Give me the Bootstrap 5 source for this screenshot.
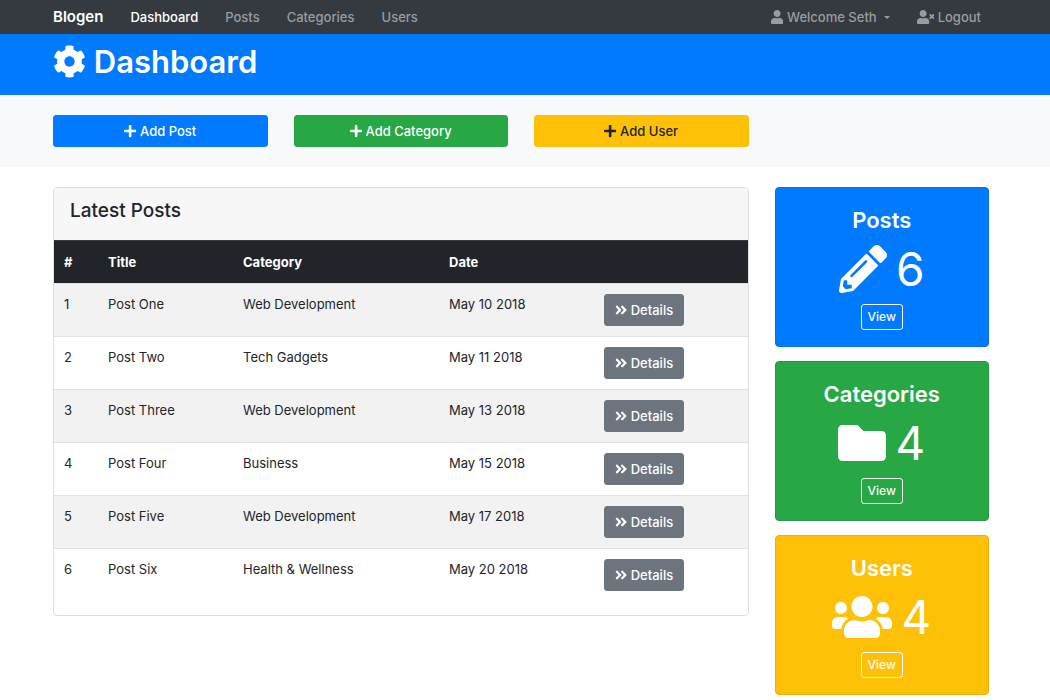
<!DOCTYPE html>
<html lang="en">
<head>
<meta charset="utf-8">
<meta name="viewport" content="width=device-width, initial-scale=1">
<title>Blogen - Dashboard</title>
<link rel="stylesheet" href="https://cdn.jsdelivr.net/npm/bootstrap@5.3.0/dist/css/bootstrap.min.css">
<style>
  body { font-family: Inter, "Liberation Sans", sans-serif; font-size: 13px; line-height: 20px; color: #212529; }
  .container { max-width: 970px; padding-left: 13px; padding-right: 21px; }
  .row { --bs-gutter-x: 26px; }
  .ico { height: 14px; fill: currentColor; vertical-align: -2px; }

  .topbar { background: #343a40; padding: 0; font-weight: 500; }
  .topbar .navbar-brand { font-size: 15px; line-height: 20px; padding: 7px 0; margin-right: 19px; font-weight: 600; }
  .topbar .nav-link { padding: 7px; line-height: 20px; color: #9a9da0; }
  .topbar .nav-link.active { color: #fff; }
  .topbar .navbar-nav { gap: 11px; }
  .topbar .dropdown-toggle::after { margin-left: 7px; border-width: 3px 3px 0; vertical-align: 3px; }

  .page-title { background: #007bff; color: #fff; padding: 8px 0 13px; }
  .page-title h1 { font-size: 31px; line-height: 40px; font-weight: 600; margin: 0; }
  .page-title .ico { height: 33px; vertical-align: -5px; }
  .actions { background: #f8f9fa; padding: 20px 0; margin-bottom: 20px; }

  .btn { --bs-btn-font-size: 13px; --bs-btn-line-height: 20px; --bs-btn-padding-x: 10px; --bs-btn-padding-y: 5px; --bs-btn-border-radius: 3px; --bs-btn-font-weight: 500; }
  .btn-primary { --bs-btn-bg: #007bff; --bs-btn-border-color: #007bff; }
  .btn-success { --bs-btn-bg: #28a745; --bs-btn-border-color: #28a745; }
  .btn-warning { --bs-btn-bg: #ffc107; --bs-btn-border-color: #ffc107; --bs-btn-color: #212529; }
  .btn-secondary { --bs-btn-bg: #6c757d; --bs-btn-border-color: #6c757d; }

  .card { --bs-card-border-radius: 4px; --bs-card-inner-border-radius: 3px; --bs-card-border-color: #dfdfdf; }
  .posts .card-header { background: #f7f7f7; padding: 11px 16px 17px; border-bottom: 0; }
  .posts h4 { font-size: 19px; line-height: 24px; font-weight: 500; margin: 0; }
  .posts .table { --bs-table-striped-bg: #f2f2f2; --bs-table-striped-color: #212529; --bs-table-color: #212529; table-layout: fixed; min-width: 640px; margin-bottom: 14px; border-color: #dee2e6; }
  .posts th, .posts td { padding: 10px; }
  .posts .table td { border-width: 1px 0 0; }
  .posts .table-dark { --bs-table-bg: #212529; }
  .posts thead th { padding: 11px 10px; border-width: 1px 0 0; font-weight: 700; }
  .col-num { width: 44px; }
  .col-title { width: 135px; }
  .col-cat { width: 206px; }
  .col-date { width: 155px; }

  .stat { color: #fff; text-align: center; margin-bottom: 14px; }
  .stat .card-body { padding: 16px; }
  .stat h3 { font-size: 22px; line-height: 32px; font-weight: 600; margin: 0; }
  .stat .figure-line { display: flex; justify-content: center; align-items: center; gap: 9px; font-size: 46px; line-height: 56px; font-weight: 400; margin: 5px 0 7px; }
  .stat .ico { height: 48px; }
  .stat .btn { --bs-btn-font-size: 12px; --bs-btn-line-height: 18px; --bs-btn-padding-x: 6px; --bs-btn-padding-y: 3px; }
  .stat-posts { background: #007bff; --bs-card-border-color: #0071eb; }
  .stat-categories { background: #28a745; --bs-card-border-color: #259a40; }
  .stat-users { background: #ffc107; --bs-card-border-color: #ebb206; }
</style>
</head>
<body>
<svg class="d-none" xmlns="http://www.w3.org/2000/svg">
  <symbol id="i-cog" viewBox="0 0 512 512"><path d="M487.4 315.7l-42.6-24.6c4.3-23.2 4.3-47 0-70.2l42.6-24.6c4.9-2.8 7.1-8.6 5.5-14-11.1-35.6-30-67.8-54.7-94.6-3.8-4.1-10-5.1-14.8-2.3L380.8 110c-17.9-15.4-38.5-27.3-60.8-35.1V25.8c0-5.6-3.9-10.5-9.4-11.7-36.7-8.2-74.3-7.8-109.2 0-5.5 1.2-9.4 6.1-9.4 11.7V75c-22.2 7.9-42.8 19.8-60.8 35.1L88.7 85.5c-4.9-2.8-11-1.9-14.8 2.3-24.7 26.7-43.6 58.9-54.7 94.6-1.7 5.4.6 11.2 5.5 14L67.3 221c-4.3 23.2-4.3 47 0 70.2l-42.6 24.6c-4.9 2.8-7.1 8.6-5.5 14 11.1 35.6 30 67.8 54.7 94.6 3.8 4.1 10 5.1 14.8 2.3l42.6-24.6c17.9 15.4 38.5 27.3 60.8 35.1v49.2c0 5.6 3.9 10.5 9.4 11.7 36.7 8.2 74.3 7.8 109.2 0 5.5-1.2 9.4-6.1 9.4-11.7v-49.2c22.2-7.9 42.8-19.8 60.8-35.1l42.6 24.6c4.9 2.8 11 1.9 14.8-2.3 24.7-26.7 43.6-58.9 54.7-94.6 1.5-5.5-.7-11.3-5.6-14.1zM256 336c-44.1 0-80-35.9-80-80s35.9-80 80-80 80 35.9 80 80-35.9 80-80 80z"/></symbol>
  <symbol id="i-user" viewBox="0 0 448 512"><path d="M224 256c70.7 0 128-57.3 128-128S294.7 0 224 0 96 57.3 96 128s57.3 128 128 128zm89.6 32h-16.7c-22.2 10.2-46.9 16-72.9 16s-50.6-5.8-72.9-16h-16.7C60.2 288 0 348.2 0 422.4V464c0 26.5 21.5 48 48 48h352c26.5 0 48-21.5 48-48v-41.6c0-74.2-60.2-134.4-134.4-134.4z"/></symbol>
  <symbol id="i-user-times" viewBox="0 0 640 512"><path d="M589.6 240l45.6-45.6c6.3-6.3 6.3-16.5 0-22.8l-22.8-22.8c-6.3-6.3-16.5-6.3-22.8 0L544 194.4l-45.6-45.6c-6.3-6.3-16.5-6.3-22.8 0l-22.8 22.8c-6.3 6.3-6.3 16.5 0 22.8l45.6 45.6-45.6 45.6c-6.3 6.3-6.3 16.5 0 22.8l22.8 22.8c6.3 6.3 16.5 6.3 22.8 0l45.6-45.6 45.6 45.6c6.3 6.3 16.5 6.3 22.8 0l22.8-22.8c6.3-6.3 6.3-16.5 0-22.8L589.6 240zM224 256c70.7 0 128-57.3 128-128S294.7 0 224 0 96 57.3 96 128s57.3 128 128 128zm89.6 32h-16.7c-22.2 10.2-46.9 16-72.9 16s-50.6-5.8-72.9-16h-16.7C60.2 288 0 348.2 0 422.4V464c0 26.5 21.5 48 48 48h352c26.5 0 48-21.5 48-48v-41.6c0-74.2-60.2-134.4-134.4-134.4z"/></symbol>
  <symbol id="i-plus" viewBox="0 0 448 512"><path d="M416 208H272V64c0-17.67-14.33-32-32-32h-32c-17.67 0-32 14.33-32 32v144H32c-17.67 0-32 14.33-32 32v32c0 17.67 14.33 32 32 32h144v144c0 17.67 14.33 32 32 32h32c17.67 0 32-14.33 32-32V304h144c17.67 0 32-14.33 32-32v-32c0-17.67-14.33-32-32-32z"/></symbol>
  <symbol id="i-more" viewBox="0 0 448 512"><path d="M224.3 273l-136 136c-9.4 9.4-24.6 9.4-33.9 0l-22.6-22.6c-9.4-9.4-9.4-24.6 0-33.9l96.4-96.4-96.4-96.4c-9.4-9.4-9.4-24.6 0-33.9L54.3 103c9.4-9.4 24.6-9.4 33.9 0l136 136c9.5 9.4 9.5 24.6.1 34zm192-34l-136-136c-9.4-9.4-24.6-9.4-33.9 0l-22.6 22.6c-9.4 9.4-9.4 24.6 0 33.9l96.4 96.4-96.4 96.4c-9.4 9.4-9.4 24.6 0 33.9l22.6 22.6c9.4 9.4 24.6 9.4 33.9 0l136-136c9.4-9.2 9.4-24.4 0-33.8z"/></symbol>
  <symbol id="i-pencil" viewBox="0 0 512 512"><path d="M497.9 142.1l-46.1 46.1c-4.7 4.7-12.3 4.7-17 0l-111-111c-4.7-4.7-4.7-12.3 0-17l46.1-46.1c18.7-18.7 49.1-18.7 67.9 0l60.1 60.1c18.8 18.7 18.8 49.1 0 67.9zM284.2 99.8L21.6 362.4.4 483.9c-2.9 16.4 11.4 30.6 27.8 27.8l121.5-21.3 262.6-262.6c4.7-4.7 4.7-12.3 0-17l-111-111c-4.8-4.7-12.4-4.7-17.1 0zM124.1 339.9c-5.5-5.5-5.5-14.3 0-19.8l154-154c5.5-5.5 14.3-5.5 19.8 0s5.5 14.3 0 19.8l-154 154c-5.5 5.5-14.3 5.5-19.8 0zM88 424h48v36.3l-64.5 11.3-31.1-31.1L51.7 376H88v48z"/></symbol>
  <symbol id="i-folder" viewBox="0 0 512 512"><path d="M464 128H272l-64-64H48C21.49 64 0 85.49 0 112v288c0 26.51 21.49 48 48 48h416c26.51 0 48-21.49 48-48V176c0-26.51-21.49-48-48-48z"/></symbol>
  <symbol id="i-users" viewBox="0 0 640 512"><path d="M96 224c35.3 0 64-28.7 64-64s-28.7-64-64-64-64 28.7-64 64 28.7 64 64 64zm448 0c35.3 0 64-28.7 64-64s-28.7-64-64-64-64 28.7-64 64 28.7 64 64 64zm32 32h-64c-17.6 0-33.5 7.1-45.1 18.6 40.3 22.1 68.9 62 75.1 109.4h66c17.7 0 32-14.3 32-32v-32c0-35.3-28.7-64-64-64zm-256 0c61.9 0 112-50.1 112-112S381.9 32 320 32 208 82.1 208 144s50.1 112 112 112zm76.8 32h-8.3c-20.8 10-43.9 16-68.5 16s-47.6-6-68.5-16h-8.3C179.6 288 128 339.6 128 403.2V432c0 26.5 21.5 48 48 48h288c26.5 0 48-21.5 48-48v-28.8c0-63.6-51.6-115.2-115.2-115.2zm-223.7-13.4C161.5 263.1 145.6 256 128 256H64c-35.3 0-64 28.7-64 64v32c0 17.7 14.3 32 32 32h65.9c6.3-47.4 34.9-87.3 75.2-109.4z"/></symbol>
</svg>

<nav class="navbar navbar-expand-sm navbar-dark topbar">
  <div class="container">
    <a class="navbar-brand" href="#">Blogen</a>
    <div class="collapse navbar-collapse show">
      <ul class="navbar-nav me-auto">
        <li class="nav-item"><a class="nav-link active" href="#">Dashboard</a></li>
        <li class="nav-item"><a class="nav-link" href="#">Posts</a></li>
        <li class="nav-item"><a class="nav-link" href="#">Categories</a></li>
        <li class="nav-item"><a class="nav-link" href="#">Users</a></li>
      </ul>
      <ul class="navbar-nav">
        <li class="nav-item dropdown"><a class="nav-link dropdown-toggle" href="#" role="button" data-bs-toggle="dropdown"><svg class="ico" viewBox="0 0 448 512" aria-hidden="true"><use href="#i-user"/></svg> Welcome Seth</a></li>
        <li class="nav-item"><a class="nav-link" href="#"><svg class="ico" viewBox="0 0 640 512" aria-hidden="true"><use href="#i-user-times"/></svg> Logout</a></li>
      </ul>
    </div>
  </div>
</nav>

<header class="page-title">
  <div class="container">
    <h1><svg class="ico" viewBox="0 0 512 512" aria-hidden="true"><use href="#i-cog"/></svg> Dashboard</h1>
  </div>
</header>

<section class="actions">
  <div class="container">
    <div class="row">
      <div class="col-3"><button type="button" class="btn btn-primary w-100"><svg class="ico" viewBox="0 0 448 512" aria-hidden="true"><use href="#i-plus"/></svg> Add Post</button></div>
      <div class="col-3"><button type="button" class="btn btn-success w-100"><svg class="ico" viewBox="0 0 448 512" aria-hidden="true"><use href="#i-plus"/></svg> Add Category</button></div>
      <div class="col-3"><button type="button" class="btn btn-warning w-100"><svg class="ico" viewBox="0 0 448 512" aria-hidden="true"><use href="#i-plus"/></svg> Add User</button></div>
    </div>
  </div>
</section>

<main class="container">
  <div class="row">
    <div class="col-md-9">
      <div class="card posts">
        <div class="card-header"><h4>Latest Posts</h4></div>
        <div class="table-responsive">
          <table class="table table-striped">
            <colgroup><col class="col-num"><col class="col-title"><col class="col-cat"><col class="col-date"><col></colgroup>
            <thead class="table-dark">
              <tr><th scope="col">#</th><th scope="col">Title</th><th scope="col">Category</th><th scope="col">Date</th><th></th></tr>
            </thead>
            <tbody>
              <tr><td>1</td><td>Post One</td><td>Web Development</td><td>May 10 2018</td><td><a href="#" class="btn btn-secondary"><svg class="ico" viewBox="0 0 448 512" aria-hidden="true"><use href="#i-more"/></svg> Details</a></td></tr>
              <tr><td>2</td><td>Post Two</td><td>Tech Gadgets</td><td>May 11 2018</td><td><a href="#" class="btn btn-secondary"><svg class="ico" viewBox="0 0 448 512" aria-hidden="true"><use href="#i-more"/></svg> Details</a></td></tr>
              <tr><td>3</td><td>Post Three</td><td>Web Development</td><td>May 13 2018</td><td><a href="#" class="btn btn-secondary"><svg class="ico" viewBox="0 0 448 512" aria-hidden="true"><use href="#i-more"/></svg> Details</a></td></tr>
              <tr><td>4</td><td>Post Four</td><td>Business</td><td>May 15 2018</td><td><a href="#" class="btn btn-secondary"><svg class="ico" viewBox="0 0 448 512" aria-hidden="true"><use href="#i-more"/></svg> Details</a></td></tr>
              <tr><td>5</td><td>Post Five</td><td>Web Development</td><td>May 17 2018</td><td><a href="#" class="btn btn-secondary"><svg class="ico" viewBox="0 0 448 512" aria-hidden="true"><use href="#i-more"/></svg> Details</a></td></tr>
              <tr><td>6</td><td>Post Six</td><td>Health &amp; Wellness</td><td>May 20 2018</td><td><a href="#" class="btn btn-secondary"><svg class="ico" viewBox="0 0 448 512" aria-hidden="true"><use href="#i-more"/></svg> Details</a></td></tr>
            </tbody>
          </table>
        </div>
      </div>
    </div>
    <div class="col-md-3">
      <div class="card stat stat-posts"><div class="card-body">
        <h3>Posts</h3>
        <div class="figure-line"><svg class="ico" viewBox="0 0 512 512" aria-hidden="true"><use href="#i-pencil"/></svg><span>6</span></div>
        <a href="#" class="btn btn-outline-light">View</a>
      </div></div>
      <div class="card stat stat-categories"><div class="card-body">
        <h3>Categories</h3>
        <div class="figure-line"><svg class="ico" viewBox="0 0 512 512" aria-hidden="true"><use href="#i-folder"/></svg><span>4</span></div>
        <a href="#" class="btn btn-outline-light">View</a>
      </div></div>
      <div class="card stat stat-users"><div class="card-body">
        <h3>Users</h3>
        <div class="figure-line"><svg class="ico" viewBox="0 0 640 512" aria-hidden="true"><use href="#i-users"/></svg><span>4</span></div>
        <a href="#" class="btn btn-outline-light">View</a>
      </div></div>
    </div>
  </div>
</main>
<script src="https://cdn.jsdelivr.net/npm/bootstrap@5.3.0/dist/js/bootstrap.bundle.min.js"></script>
</body>
</html>
